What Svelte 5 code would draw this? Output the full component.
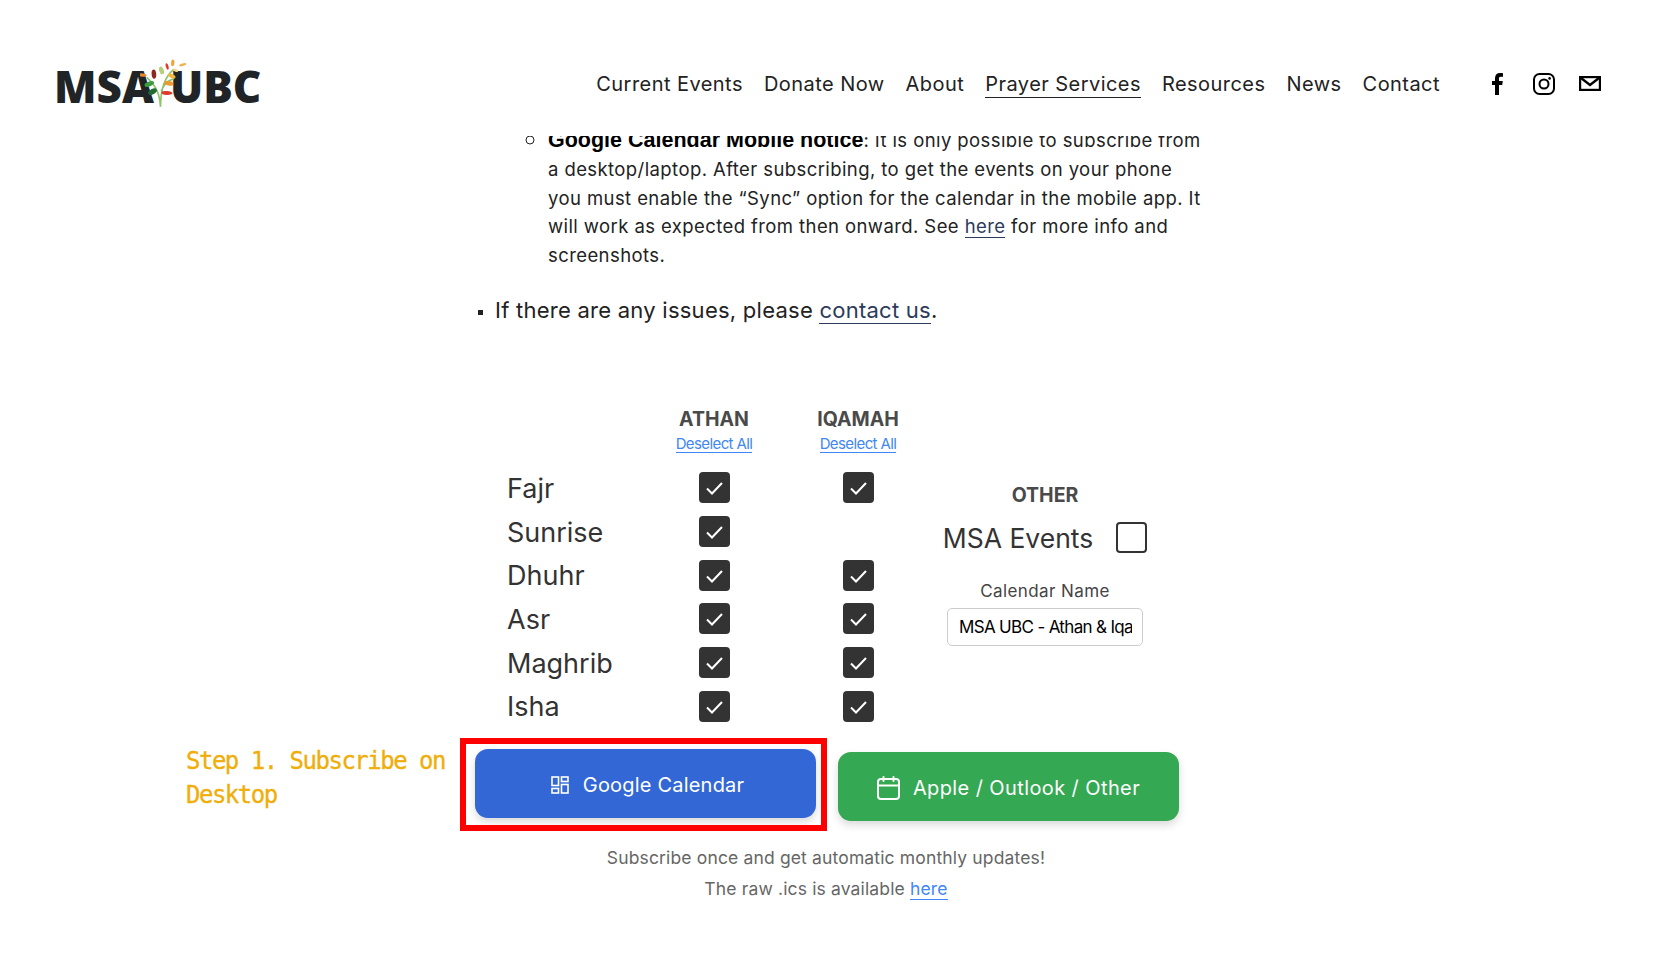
<script lang="ts">
	// Prayer calendar subscribe page, scrolled a little under the fixed header
	const navLinks = ['Current Events', 'Donate Now', 'About', 'Prayer Services', 'Resources', 'News', 'Contact'];

	const prayers = [
		{ name: 'Fajr', iqamah: true },
		{ name: 'Sunrise', iqamah: false },
		{ name: 'Dhuhr', iqamah: true },
		{ name: 'Asr', iqamah: true },
		{ name: 'Maghrib', iqamah: true },
		{ name: 'Isha', iqamah: true }
	];

	// logo leaves, in 3x logo coordinates
	const leaves = [
		{ x: 338, y: 101, rx: 12, ry: 5, rot: 5, fill: '#e8872b' },
		{ x: 372, y: 98, rx: 7, ry: 14, rot: -5, fill: '#8c2a1e' },
		{ x: 395, y: 87, rx: 7, ry: 12, rot: -20, fill: '#b5cf7a' },
		{ x: 412, y: 75, rx: 4, ry: 10, rot: -15, fill: '#dd3a2a' },
		{ x: 429, y: 64, rx: 5, ry: 10, rot: 5, fill: '#eda63a' },
		{ x: 459, y: 70, rx: 11, ry: 4, rot: -15, fill: '#eeb552' },
		{ x: 426, y: 104, rx: 12, ry: 6, rot: 25, fill: '#f1b73c' },
		{ x: 438, y: 87, rx: 8, ry: 4, rot: 20, fill: '#f3d48b' },
		{ x: 417, y: 126, rx: 14, ry: 7, rot: 10, fill: '#ea9a33' },
		{ x: 411, y: 155, rx: 17, ry: 6, rot: 3, fill: '#dd3a2a' },
		{ x: 358, y: 128, rx: 15, ry: 7, rot: -20, fill: '#3d9a3d' },
		{ x: 368, y: 151, rx: 14, ry: 8, rot: -30, fill: '#1f6b34' }
	];
</script>

<div class="page">
	<header class="topbar">
		<a class="logo" href="#top">
			<span>MSA</span><span class="logo-right">UBC</span>
			<svg class="tree" viewBox="330 50 145 150" aria-hidden="true">
				<path d="M392 197C390 160 380 135 350 108M392 197C392 150 400 110 432 84M394 150C402 128 412 118 432 112" fill="none" stroke="#8cc36a" stroke-width="5"/>
				{#each leaves as l}
					<ellipse cx={l.x} cy={l.y} rx={l.rx} ry={l.ry} fill={l.fill} transform="rotate({l.rot} {l.x} {l.y})"/>
				{/each}
			</svg>
		</a>
		<nav class="nav">
			{#each navLinks as link}
				<a href="#top" class:current={link === 'Prayer Services'}>{link}</a>
			{/each}
		</nav>
		<div class="social">
			<svg width="11" height="22" viewBox="0 0 11 22" aria-label="Facebook"><path d="M3 22V12H0V8h3V5.2C3 1.8 5 0 8 0c1.300 0 2.400.1 3 .2v3.500H8.800C7.300 3.700 7 4.500 7 5.500V8h3.800l-.6 4H7v10z" fill="#000"/></svg>
			<svg width="22" height="22" viewBox="0 0 22 22" aria-label="Instagram"><rect x="1" y="1" width="20" height="20" rx="5.500" fill="none" stroke="#000" stroke-width="2"/><circle cx="11" cy="11" r="4.500" fill="none" stroke="#000" stroke-width="2"/><circle cx="16.600" cy="5.400" r="1.300" fill="#000"/></svg>
			<svg width="22" height="15" viewBox="0 0 22 15" aria-label="Email"><rect x="1" y="1" width="20" height="13" fill="none" stroke="#000" stroke-width="2.400"/><path d="M2 2l9 7 9-7" fill="none" stroke="#000" stroke-width="2.400"/></svg>
		</div>
	</header>

	<main class="content">
		<section class="notes">
			<ul class="notes-sub">
				<li><strong>Google Calendar Mobile notice</strong>:  It is only possible to subscribe from a desktop/laptop. After subscribing, to get the events on your phone you must enable the “Sync” option for the calendar in the mobile app. It will work as expected from then onward. See <a href="#top">here</a> for more info and screenshots.</li>
			</ul>
			<ul class="notes-main">
				<li>If there are any issues, please <a href="#top">contact us</a>.</li>
			</ul>
		</section>

		<section class="picker">
			<div class="grid">
				<div></div>
				<div class="col-head"><h3>ATHAN</h3><a href="#top">Deselect All</a></div>
				<div class="col-head"><h3>IQAMAH</h3><a href="#top">Deselect All</a></div>
				{#each prayers as p}
					<div class="prayer">{p.name}</div>
					<div class="cell"><span class="box on"><svg viewBox="0 0 31 31"><path d="M8 16.500l5 5 10-10.500" /></svg></span></div>
					<div class="cell">
						{#if p.iqamah}
							<span class="box on"><svg viewBox="0 0 31 31"><path d="M8 16.500l5 5 10-10.500" /></svg></span>
						{/if}
					</div>
				{/each}
			</div>
			<div class="other">
				<h3>OTHER</h3>
				<div class="events"><span>MSA Events</span><span class="box"></span></div>
				<label class="cal-label" for="cal-name">Calendar Name</label>
				<input id="cal-name" class="cal-input" value="MSA UBC - Athan &amp; Iqamah" />
			</div>
		</section>

		<section class="actions">
			<p class="step">Step 1. Subscribe on Desktop</p>
			<div class="btn-wrap lifted">
				<a class="btn blue" href="#top">
					<svg width="18" height="18" viewBox="0 0 18 18"><g fill="none" stroke="#fff" stroke-width="1.600"><rect x="1" y="1" width="6.500" height="8.500"/><rect x="10.500" y="1" width="6.500" height="4.500"/><rect x="1" y="12.500" width="6.500" height="4.500"/><rect x="10.500" y="8.500" width="6.500" height="8.500"/></g></svg>
					Google Calendar
				</a>
				<div class="highlight"></div>
			</div>
			<div class="btn-wrap">
				<a class="btn green" href="#top">
					<svg width="23" height="24" viewBox="0 0 23 24"><g fill="none" stroke="#fff" stroke-width="2" stroke-linecap="round"><rect x="1" y="3" width="21" height="20" rx="3"/><path d="M1 9.500h21M6.500 1v4M16.500 1v4"/></g></svg>
					Apple / Outlook / Other
				</a>
			</div>
		</section>

		<footer class="foot">
			<p>Subscribe once and get automatic monthly updates!</p>
			<p>The raw .ics is available <a href="#top">here</a></p>
		</footer>
	</main>
</div>

<style>
	:global(body) {
		margin: 0;
		background: #fff;
	}

	.page {
		height: 954px;
		overflow: hidden;
		font-family: Inter, "Liberation Sans", sans-serif;
		color: #222;
	}

	a {
		color: inherit;
		text-decoration: none;
	}

	h3 {
		margin: 0;
	}

	/* header */
	.topbar {
		position: relative;
		z-index: 2;
		display: flex;
		align-items: center;
		height: 136px;
		padding: 34px 53px 0 54px;
		background: #fff;
		box-sizing: border-box;
	}

	.logo {
		position: relative;
		display: flex;
		font-family: "Open Sans", sans-serif;
		font-weight: 800;
		font-size: 44px;
		color: #212427;
		margin-top: 2px;
		width: 204px;
	}

	.logo-right {
		margin-left: 16px;
	}

	.tree {
		position: absolute;
		left: 86px;
		top: 2px;
		width: 48px;
		height: 50px;
	}

	.nav {
		display: flex;
		gap: 21px;
		margin-left: auto;
		font-size: 20px;
		letter-spacing: 0.45px;
		margin-right: 52px;
		margin-top: -2px;
	}

	.nav a {
		border-bottom: 1px solid transparent;
		line-height: 26px;
	}

	.nav a.current {
		border-bottom-color: #222;
	}

	.social {
		display: flex;
		align-items: center;
		gap: 30px;
		margin-top: -3px;
	}

	.social svg:last-child {
		margin-left: -6px;
	}

	/* scrolled body */
	.content {
		margin-top: -11px;
	}

	.notes {
		margin-left: 455px;
		width: 770px;
	}

	.notes ul {
		margin: 0;
		padding: 0;
	}

	.notes a {
		color: #2c3a5c;
		border-bottom: 1px solid #2c3a5c;
	}

	.notes-sub {
		padding-left: 93px !important;
		font-size: 18.500px;
		letter-spacing: 0.41px;
		line-height: 28.800px;
		list-style: circle;
		width: 660px;
	}

	.notes-sub li::marker {
		font-size: 24px;
	}

	.notes-main {
		padding-left: 40px !important;
		margin-top: 23px !important;
		font-size: 22px;
		letter-spacing: 0.25px;
		line-height: 35px;
		list-style: square;
	}

	.notes-main li::marker {
		font-size: 15px;
	}

	.notes strong {
		font-family: "Liberation Sans", sans-serif;
		font-size: 21.500px;
		letter-spacing: 0;
		font-weight: 700;
		color: #000;
	}

	.picker {
		display: flex;
		margin: 78px 0 0 507px;
	}

	.grid {
		display: grid;
		grid-template-columns: 135px 144px 144px;
		grid-auto-rows: 43.700px;
		grid-template-rows: 60px;
	}

	.col-head {
		text-align: center;
	}

	.col-head h3,
	.other h3 {
		font-size: 19.500px;
		font-weight: 700;
		color: #4a4a4a;
		line-height: 26px;
	}

	.col-head a {
		display: inline-block;
		margin-top: 3px;
		font-size: 15px;
		letter-spacing: -0.6px;
		line-height: 17px;
		color: #3f87f5;
		border-bottom: 1px solid #3f87f5;
	}

	.prayer {
		font-size: 27px;
		line-height: 46px;
		color: #333;
	}

	.cell {
		display: flex;
		justify-content: center;
		align-items: center;
	}

	.box {
		display: block;
		width: 31px;
		height: 31px;
		border-radius: 4px;
		box-sizing: border-box;
		border: 2px solid #333;
		background: #fff;
		flex: none;
	}

	.box.on {
		background: #333;
		border: 0;
	}

	.box svg {
		display: block;
		width: 31px;
		height: 31px;
		fill: none;
		stroke: #fff;
		stroke-width: 2;
	}

	.other {
		display: flex;
		flex-direction: column;
		align-items: center;
		width: 230px;
		padding-top: 76px;
		color: #333;
	}

	.events {
		display: flex;
		align-items: center;
		gap: 23px;
		font-size: 26.500px;
		margin-top: 14px;
	}

	.cal-label {
		margin-top: 27px;
		font-size: 17px;
		letter-spacing: 0.4px;
		color: #444;
	}

	.cal-input {
		box-sizing: border-box;
		width: 196px;
		height: 38px;
		margin-top: 7px;
		padding: 0 10px 0 11px;
		border: 1px solid #ccc;
		border-radius: 5px;
		font: 17px Inter, sans-serif;
		letter-spacing: -0.67px;
		color: #000;
		background: #fff;
	}

	.actions {
		display: flex;
		align-items: flex-start;
		margin: 24px 0 0 186px;
	}

	.step {
		width: 289px;
		margin: -8px 0 0;
		font-family: "DejaVu Sans Mono", monospace;
		font-size: 24px;
		letter-spacing: -1.500px;
		-webkit-text-stroke: 0.3px #f0ae0a;
		line-height: 34px;
		color: #f0ae0a;
	}

	.btn-wrap {
		position: relative;
		width: 341px;
	}

	.btn-wrap + .btn-wrap {
		margin-left: 22px;
	}

	.lifted {
		transform: translateY(-3px);
	}

	.btn {
		display: flex;
		align-items: center;
		justify-content: center;
		gap: 13px;
		height: 69px;
		padding-top: 2px;
		box-sizing: border-box;
		border-radius: 13px;
		font-size: 20px;
		letter-spacing: 0.4px;
		color: #fff;
		box-shadow: 0 4px 8px rgba(0, 0, 0, 0.15);
	}

	.blue {
		background: #3367d6;
		letter-spacing: 0.2px;
		gap: 14px;
		padding-left: 4px;
	}

	.green {
		background: #34a853;
	}

	.highlight {
		position: absolute;
		left: -15px;
		right: -11px;
		top: -11px;
		bottom: -13px;
		border: 6px solid #f00;
		pointer-events: none;
	}

	.foot {
		margin-top: 22px;
		width: 1652px;
		text-align: center;
		font-size: 17.500px;
		letter-spacing: 0.15px;
		line-height: 30.600px;
		color: #666;
	}

	.foot p {
		margin: 0;
	}

	.foot a {
		color: #3f87f5;
		border-bottom: 1px solid #3f87f5;
	}
</style>
